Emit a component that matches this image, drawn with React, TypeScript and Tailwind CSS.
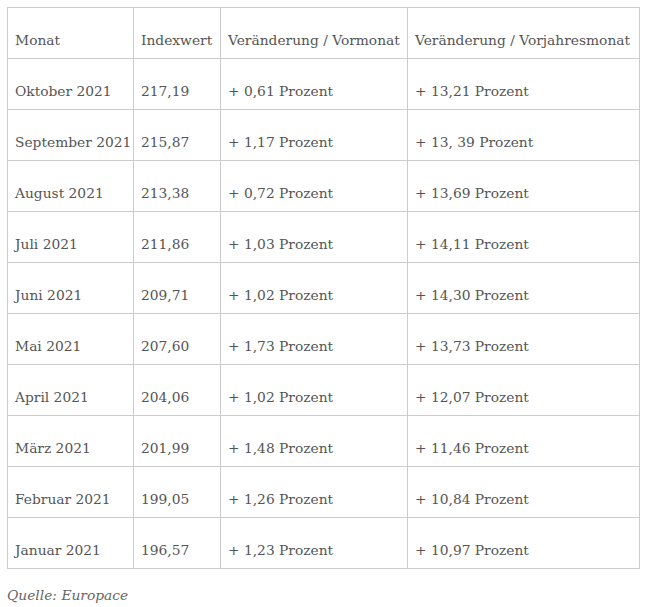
const rows = [
  ['Oktober 2021', '217,19', '+ 0,61 Prozent', '+ 13,21 Prozent'],
  ['September 2021', '215,87', '+ 1,17 Prozent', '+ 13, 39 Prozent'],
  ['August 2021', '213,38', '+ 0,72 Prozent', '+ 13,69 Prozent'],
  ['Juli 2021', '211,86', '+ 1,03 Prozent', '+ 14,11 Prozent'],
  ['Juni 2021', '209,71', '+ 1,02 Prozent', '+ 14,30 Prozent'],
  ['Mai 2021', '207,60', '+ 1,73 Prozent', '+ 13,73 Prozent'],
  ['April 2021', '204,06', '+ 1,02 Prozent', '+ 12,07 Prozent'],
  ['März 2021', '201,99', '+ 1,48 Prozent', '+ 11,46 Prozent'],
  ['Februar 2021', '199,05', '+ 1,26 Prozent', '+ 10,84 Prozent'],
  ['Januar 2021', '196,57', '+ 1,23 Prozent', '+ 10,97 Prozent'],
];

const header = ['Monat', 'Indexwert', 'Veränderung / Vormonat', 'Veränderung / Vorjahresmonat'];

const cell = 'h-[51px] border border-[#cccccc] pl-[7px] pr-1 pb-[6px] align-bottom whitespace-nowrap font-normal text-left';

export default function App() {
  return (
    <div className="bg-white pt-[7px] pl-[7px] text-[#555555] [font-family:'DejaVu_Serif',serif] text-[13.8px] leading-[24px]">
      <table className="table-fixed border-collapse w-[632px]">
        <colgroup>
          <col className="w-[126px]" />
          <col className="w-[87px]" />
          <col className="w-[187px]" />
          <col className="w-[232px]" />
        </colgroup>
        <thead>
          <tr>
            {header.map((h) => (
              <th key={h} className={cell}>
                {h}
              </th>
            ))}
          </tr>
        </thead>
        <tbody>
          {rows.map((r) => (
            <tr key={r[0]}>
              {r.map((v, i) => (
                <td key={i} className={cell}>
                  {v}
                </td>
              ))}
            </tr>
          ))}
        </tbody>
      </table>
      <p className="mt-[14px] italic text-[#666666]">Quelle: Europace</p>
    </div>
  );
}
